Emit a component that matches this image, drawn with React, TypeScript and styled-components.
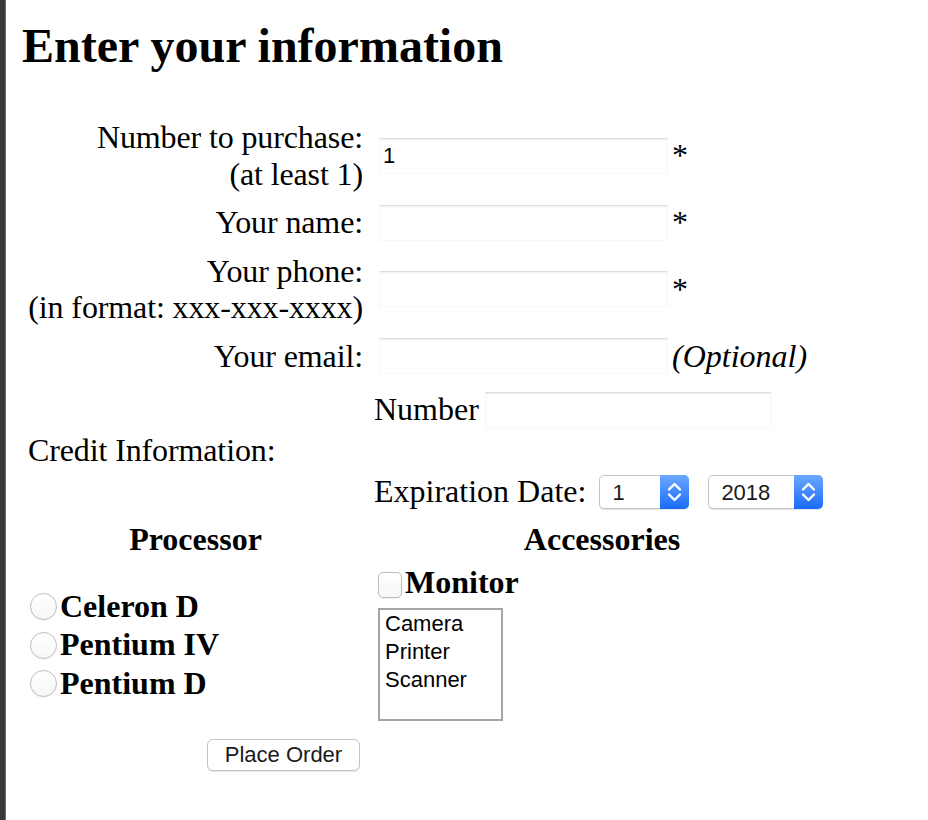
import React from "react";
import styled, { createGlobalStyle } from "styled-components";

const GlobalStyle = createGlobalStyle`
  html, body { margin: 0; padding: 0; background: #fff; }
  body { font-family: "Liberation Serif", "Times New Roman", serif; color: #000; }
`;

const Page = styled.div`
  min-height: 100vh;
  box-sizing: border-box;
  padding: 18px 0 0 22px;
  background: linear-gradient(
    to right,
    #3a3a3a 0,
    #3a3a3a 5px,
    #6e6e6e 5px,
    #6e6e6e 6px,
    #ffffff 6px
  );
`;

const Title = styled.h2`
  margin: 0;
  font-size: 48px;
  line-height: 55px;
  font-weight: bold;
`;

const Form = styled.form`
  display: flex;
  flex-direction: column;
  margin: 46px 0 0;
  padding-left: 6px;
  font-size: 32px;
  line-height: 1.15;
`;

const Row = styled.div<{ $gap: number }>`
  display: grid;
  grid-template-columns: 343px 301px 161px;
  align-items: center;
  margin-top: ${(p) => p.$gap}px;
`;

const Label = styled.div<{ $align?: "left" | "right" }>`
  text-align: ${(p) => p.$align ?? "right"};
  padding-right: 8px;
  white-space: nowrap;
  letter-spacing: -0.12px;
`;

const InputCell = styled.div`
  padding-left: 8px;
`;

const TextField = styled.input<{ $w?: number }>`
  box-sizing: border-box;
  display: block;
  width: ${(p) => p.$w ?? 289}px;
  height: 36px;
  margin: 4px 0;
  padding: 0 0 0 3px;
  border: 1px solid #f8f8f8;
  border-top: 1px solid #dcdcdc;
  box-shadow: inset 0 1px 2px rgba(0, 0, 0, 0.07);
  background: #fff;
  font-family: "Liberation Sans", Arial, sans-serif;
  font-size: 22px;
  color: #000;
  outline: none;
`;

const Mark = styled.div<{ $italic?: boolean }>`
  font-style: ${(p) => (p.$italic ? "italic" : "normal")};
  white-space: nowrap;
`;

const CreditBlock = styled.div`
  grid-column: 2 / 4;
  padding: 0 0 4px 3px;
  display: flex;
  flex-direction: column;
`;

const CreditLine = styled.div<{ $h: number; $top?: number }>`
  display: flex;
  align-items: center;
  height: ${(p) => p.$h}px;
  margin-top: ${(p) => p.$top ?? 0}px;
  white-space: nowrap;
`;

const InlineField = styled(TextField)`
  margin: 2px 0 0 6px;
`;

const SelectWrap = styled.div<{ $left: number }>`
  position: relative;
  margin: 2px 0 0 ${(p) => p.$left}px;
  display: inline-block;
`;

const NativeSelect = styled.select<{ $w: number }>`
  appearance: none;
  -webkit-appearance: none;
  box-sizing: border-box;
  display: block;
  width: ${(p) => p.$w}px;
  height: 34px;
  padding: 0 0 0 12px;
  border: 1px solid #c6c6c6;
  border-radius: 5px;
  background: #fff;
  box-shadow: 0 1px 1px rgba(0, 0, 0, 0.12);
  font-family: "Liberation Sans", Arial, sans-serif;
  font-size: 22px;
  color: #1a1a1a;
  outline: none;
`;

const Cap = styled.span`
  position: absolute;
  top: 0;
  right: 0;
  bottom: 0;
  width: 29px;
  border-radius: 0 5px 5px 0;
  background: linear-gradient(#6ba8ff, #1a6bf8);
  display: flex;
  align-items: center;
  justify-content: center;
  pointer-events: none;
`;

const HeadCell = styled.div<{ $span?: boolean }>`
  grid-column: ${(p) => (p.$span ? "2 / 4" : "auto")};
  text-align: center;
  font-weight: bold;
  padding-right: ${(p) => (p.$span ? 0 : 8)}px;
`;

const RadioList = styled.div`
  padding-left: 2px;
  display: flex;
  flex-direction: column;
`;

const RadioLine = styled.label`
  display: flex;
  align-items: center;
  height: 38.5px;
  font-weight: bold;
  white-space: nowrap;
`;

const Radio = styled.input`
  appearance: none;
  -webkit-appearance: none;
  box-sizing: border-box;
  width: 27px;
  height: 27px;
  margin: 2px 3px 0 0;
  border-radius: 50%;
  border: 1px solid #bcbcbc;
  background: linear-gradient(#ffffff, #f7f7f7);
  box-shadow: 0 1px 1px rgba(0, 0, 0, 0.05);
`;

const AccessoryCell = styled.div`
  padding-left: 7px;
  display: flex;
  flex-direction: column;
  align-items: flex-start;
`;

const CheckLine = styled.label`
  display: flex;
  align-items: center;
  height: 37px;
  font-weight: bold;
  white-space: nowrap;
`;

const Check = styled.input`
  appearance: none;
  -webkit-appearance: none;
  box-sizing: border-box;
  width: 24px;
  height: 26px;
  margin: 5px 3px 0 0;
  border-radius: 5px;
  border: 1px solid #bdbdbd;
  background: linear-gradient(#ffffff, #f7f7f7);
  box-shadow: 0 1px 1px rgba(0, 0, 0, 0.05);
`;

const ListBox = styled.div`
  box-sizing: border-box;
  width: 125px;
  height: 113px;
  margin: 7px 0 4px;
  border: 2px solid #a5a5a5;
  padding: 0 5px;
  font-family: "Liberation Sans", Arial, sans-serif;
  font-size: 22px;
  line-height: 28px;
  color: #000;
`;

const Option = styled.div``;

const ButtonCell = styled.div`
  text-align: right;
  padding-right: 11px;
`;

const Button = styled.button`
  box-sizing: border-box;
  width: 153px;
  height: 32px;
  margin-top: 6px;
  padding: 0;
  border: 1px solid #c4c4c4;
  border-radius: 6px;
  background: #fff;
  box-shadow: 0 1px 1px rgba(0, 0, 0, 0.1);
  font-family: "Liberation Sans", Arial, sans-serif;
  font-size: 22px;
  color: #1a1a1a;
`;

const Chevrons = () => (
  <svg width="29" height="34" viewBox="0 0 29 34" fill="none">
    <path
      d="M9 14.5 L14.5 9 L20 14.5"
      stroke="#fff"
      strokeWidth="2.4"
      strokeLinecap="round"
      strokeLinejoin="round"
    />
    <path
      d="M9 19.5 L14.5 25 L20 19.5"
      stroke="#fff"
      strokeWidth="2.4"
      strokeLinecap="round"
      strokeLinejoin="round"
    />
  </svg>
);

const Picker = ({ left, width, value, options }: { left: number; width: number; value: string; options: string[] }) => (
  <SelectWrap $left={left}>
    <NativeSelect $w={width} defaultValue={value}>
      {options.map((o) => (
        <option key={o} value={o}>
          {o}
        </option>
      ))}
    </NativeSelect>
    <Cap>
      <Chevrons />
    </Cap>
  </SelectWrap>
);

export default function App() {
  const months = Array.from({ length: 12 }, (_, i) => String(i + 1));
  const years = ["2018", "2019", "2020", "2021", "2022"];
  return (
    <>
      <GlobalStyle />
      <Page>
        <Title>Enter your information</Title>
        <Form onSubmit={(e) => e.preventDefault()}>
          <Row $gap={0}>
            <Label>
              Number to purchase:
              <br />
              (at least 1)
            </Label>
            <InputCell>
              <TextField defaultValue="1" />
            </InputCell>
            <Mark>*</Mark>
          </Row>
          <Row $gap={8}>
            <Label>Your name:</Label>
            <InputCell>
              <TextField />
            </InputCell>
            <Mark>*</Mark>
          </Row>
          <Row $gap={8}>
            <Label>
              Your phone:
              <br />
              (in format: xxx-xxx-xxxx)
            </Label>
            <InputCell>
              <TextField />
            </InputCell>
            <Mark>*</Mark>
          </Row>
          <Row $gap={8}>
            <Label>Your email:</Label>
            <InputCell>
              <TextField />
            </InputCell>
            <Mark $italic>(Optional)</Mark>
          </Row>
          <Row $gap={8}>
            <Label $align="left">Credit Information:</Label>
            <CreditBlock>
              <CreditLine $h={46}>
                Number
                <InlineField $w={287} />
              </CreditLine>
              <CreditLine $h={40} $top={39}>
                Expiration Date:
                <Picker left={13} width={90} value="1" options={months} />
                <Picker left={19} width={115} value="2018" options={years} />
              </CreditLine>
            </CreditBlock>
          </Row>
          <Row $gap={6}>
            <HeadCell>Processor</HeadCell>
            <HeadCell $span>Accessories</HeadCell>
          </Row>
          <Row $gap={6}>
            <RadioList>
              <RadioLine>
                <Radio type="radio" name="cpu" />
                Celeron D
              </RadioLine>
              <RadioLine>
                <Radio type="radio" name="cpu" />
                Pentium IV
              </RadioLine>
              <RadioLine>
                <Radio type="radio" name="cpu" />
                Pentium D
              </RadioLine>
            </RadioList>
            <AccessoryCell>
              <CheckLine>
                <Check type="checkbox" />
                Monitor
              </CheckLine>
              <ListBox role="listbox">
                <Option>Camera</Option>
                <Option>Printer</Option>
                <Option>Scanner</Option>
              </ListBox>
            </AccessoryCell>
          </Row>
          <Row $gap={8}>
            <ButtonCell>
              <Button type="submit">Place Order</Button>
            </ButtonCell>
          </Row>
        </Form>
      </Page>
    </>
  );
}
